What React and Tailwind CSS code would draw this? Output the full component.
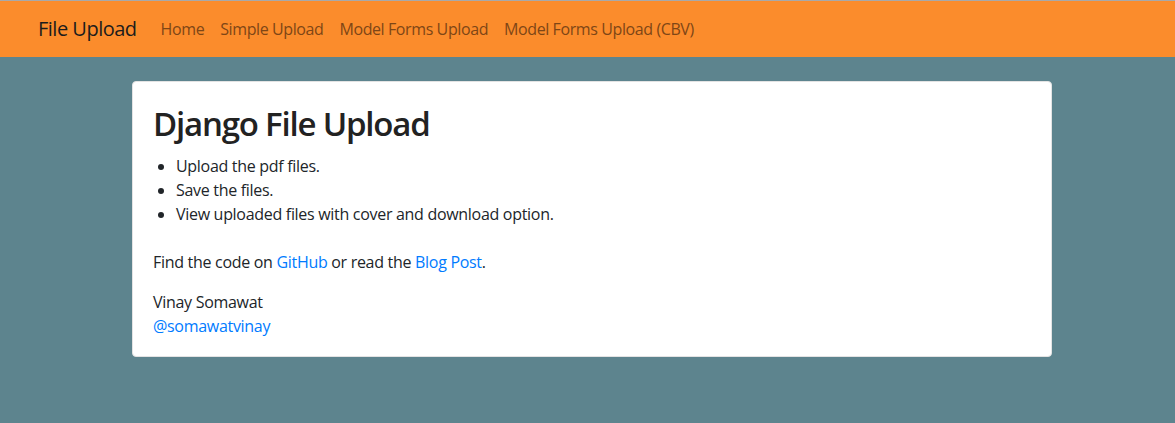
import React from 'react';

const navLinks = ['Home', 'Simple Upload', 'Model Forms Upload', 'Model Forms Upload (CBV)'];

const App = () => {
  return (
    <div
      className="min-h-[423px] bg-[#5d848e] text-[#212529]"
      style={{ fontFamily: '"Open Sans", "Noto Sans", Arial, sans-serif' }}
    >
      {/* Navbar */}
      <nav className="flex items-center h-[57px] bg-[#fb8c2c] border-t border-[#a9a9a9] pl-[38px]">
        <a href="#" className="text-[20px] leading-[30px] text-[#1c1c1c] mr-[24px] tracking-[-0.5px]">
          File Upload
        </a>
        <ul className="flex items-center gap-[16px]">
          {navLinks.map(link => (
            <li key={link}>
              <a href="#" className="text-[16px] leading-6 text-[#7e4616] tracking-[-0.4px]">
                {link}
              </a>
            </li>
          ))}
        </ul>
      </nav>

      {/* Card */}
      <div className="pt-6">
        <div className="ml-[132px] w-[920px] bg-white rounded border border-[#e3e3e3] px-5 pt-5 pb-[18px]">
          <h1 className="text-[33px] leading-[44px] font-semibold mb-2 tracking-[-1.2px] text-[#222]">
            Django File Upload
          </h1>
          <ul className="list-disc pl-[23px] mb-6 text-[16px] leading-6 tracking-[-0.3px]">
            <li>Upload the pdf files.</li>
            <li>Save the files.</li>
            <li>View uploaded files with cover and download option.</li>
          </ul>
          <p className="text-[16px] leading-6 mb-4 tracking-[-0.3px]">
            Find the code on <a href="#" className="text-[#007bff]">GitHub</a> or read the{' '}
            <a href="#" className="text-[#007bff]">Blog Post</a>.
          </p>
          <p className="text-[16px] leading-6 tracking-[-0.3px]">
            Vinay Somawat
            <br />
            <a href="#" className="text-[#007bff]">@somawatvinay</a>
          </p>
        </div>
      </div>
    </div>
  );
};

export default App;
